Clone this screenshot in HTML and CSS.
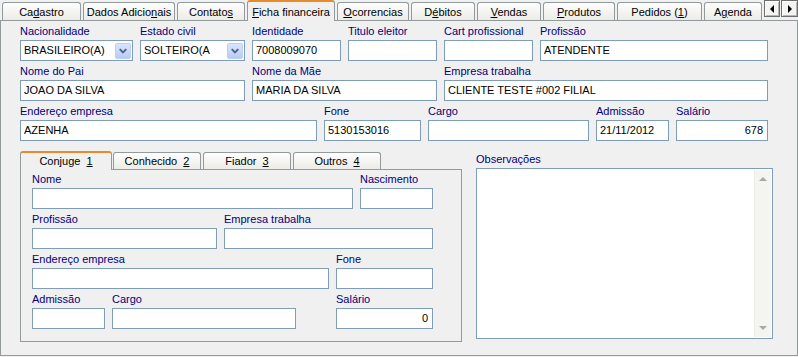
FILE: index.html
```html
<!DOCTYPE html>
<html lang="pt-BR">
<head>
  <meta charset="UTF-8">
  <title>Ficha financeira</title>
  <link rel="stylesheet" href="styles.css">
</head>
<body>
  <!-- Abas principais -->
  <div class="tabs">
    <div class="tab t-cad">Ca<u>d</u>astro</div>
    <div class="tab t-dad">Dados Adicio<u>n</u>ais</div>
    <div class="tab t-con">Contato<u>s</u></div>
    <div class="tab t-fic active"><u>F</u>icha financeira</div>
    <div class="tab t-oco"><u>O</u>correncias</div>
    <div class="tab t-deb">D<u>é</u>bitos</div>
    <div class="tab t-ven"><u>V</u>endas</div>
    <div class="tab t-pro"><u>P</u>rodutos</div>
    <div class="tab t-ped">Pedidos (<u>1</u>)</div>
    <div class="tab t-age">A<u>g</u>enda</div>
    <div class="scroll-btns">
      <span class="sbtn"><i class="tri-left"></i></span>
      <span class="sbtn"><i class="tri-right"></i></span>
    </div>
  </div>

  <div class="panel">
    <div class="row">
      <div class="field w113">
        <label>Nacionalidade</label>
        <div class="input combo"><span class="val">BRASILEIRO(A)</span><span class="drop"><svg width="15" height="15" viewBox="0 0 15 15"><path d="M4 6 L7.5 9.5 L11 6" fill="none" stroke="#4d6185" stroke-width="2"/></svg></span></div>
      </div>
      <div class="field w105">
        <label>Estado civil</label>
        <div class="input combo"><span class="val">SOLTEIRO(A</span><span class="drop"><svg width="15" height="15" viewBox="0 0 15 15"><path d="M4 6 L7.5 9.5 L11 6" fill="none" stroke="#4d6185" stroke-width="2"/></svg></span></div>
      </div>
      <div class="field w89">
        <label>Identidade</label>
        <div class="input">7008009070</div>
      </div>
      <div class="field w89">
        <label>Titulo eleitor</label>
        <div class="input"></div>
      </div>
      <div class="field w89">
        <label>Cart profissional</label>
        <div class="input"></div>
      </div>
      <div class="field w228">
        <label>Profissão</label>
        <div class="input">ATENDENTE</div>
      </div>
    </div>

    <div class="row">
      <div class="field w225">
        <label>Nome do Pai</label>
        <div class="input">JOAO DA SILVA</div>
      </div>
      <div class="field w185">
        <label>Nome da Mãe</label>
        <div class="input">MARIA DA SILVA</div>
      </div>
      <div class="field w324">
        <label>Empresa trabalha</label>
        <div class="input">CLIENTE TESTE #002 FILIAL</div>
      </div>
    </div>

    <div class="row">
      <div class="field w297">
        <label>Endereço empresa</label>
        <div class="input">AZENHA</div>
      </div>
      <div class="field w97">
        <label>Fone</label>
        <div class="input">5130153016</div>
      </div>
      <div class="field w161">
        <label>Cargo</label>
        <div class="input"></div>
      </div>
      <div class="field w73">
        <label>Admissão</label>
        <div class="input">21/11/2012</div>
      </div>
      <div class="field w92">
        <label>Salário</label>
        <div class="input num">678</div>
      </div>
    </div>

    <div class="lower">
      <div class="sub">
        <div class="subtabs">
          <div class="subtab active">Conjuge&nbsp;&nbsp;<u>1</u></div>
          <div class="subtab">Conhecido&nbsp;&nbsp;<u>2</u></div>
          <div class="subtab">Fiador&nbsp;&nbsp;<u>3</u></div>
          <div class="subtab">Outros&nbsp;&nbsp;<u>4</u></div>
        </div>
        <div class="subpanel">
          <div class="row">
            <div class="field w321">
              <label>Nome</label>
              <div class="input"></div>
            </div>
            <div class="field w73">
              <label>Nascimento</label>
              <div class="input"></div>
            </div>
          </div>
          <div class="row">
            <div class="field w185">
              <label>Profissão</label>
              <div class="input"></div>
            </div>
            <div class="field w209">
              <label>Empresa trabalha</label>
              <div class="input"></div>
            </div>
          </div>
          <div class="row">
            <div class="field w297">
              <label>Endereço empresa</label>
              <div class="input"></div>
            </div>
            <div class="field w97">
              <label>Fone</label>
              <div class="input"></div>
            </div>
          </div>
          <div class="row">
            <div class="field w73">
              <label>Admissão</label>
              <div class="input"></div>
            </div>
            <div class="field w184">
              <label>Cargo</label>
              <div class="input"></div>
            </div>
            <div class="field w97 push">
              <label>Salário</label>
              <div class="input num">0</div>
            </div>
          </div>
        </div>
      </div>

      <div class="field obs">
        <label>Observações</label>
        <div class="memo">
          <div class="vscroll">
            <i class="up"></i>
            <i class="down"></i>
          </div>
        </div>
      </div>
    </div>
  </div>
</body>
</html>
```

FILE: styles.css
```css
:root {
  --bg: #f0f0f0;
  --frame: #919b9c;
  --edit: #7f9db9;
  --label: #000080;
}
* { margin: 0; padding: 0; box-sizing: border-box; }
body {
  width: 798px;
  height: 357px;
  overflow: hidden;
  background: var(--bg);
  font-family: "Liberation Sans", Arial, sans-serif;
  font-size: 11px;
  color: #000;
}
u { text-decoration: underline; text-underline-offset: 1px; }

/* Abas principais */
.tabs {
  display: flex;
  align-items: flex-end;
  height: 20px;
  padding-left: 2px;
  gap: 2px;
}
.tab {
  height: 18px;
  line-height: 18px;
  text-align: center;
  white-space: nowrap;
  border: 1px solid var(--frame);
  border-bottom: none;
  border-radius: 3px 3px 0 0;
  background: linear-gradient(#fefefe, #ecebe6);
}
.tab.active {
  height: 21px;
  margin-bottom: -1px;
  line-height: 20px;
  border-top: 2px solid #e68b2c;
  background: var(--bg);
  position: relative;
  z-index: 1;
}
.t-cad { width: 79px; }
.t-dad { width: 92px; }
.t-con { width: 68px; }
.t-fic { width: 88px; }
.t-oco { width: 72px; }
.t-deb { width: 64px; }
.t-ven { width: 64px; }
.t-pro { width: 72px; }
.t-ped { width: 85px; }
.t-age { width: 58px; }

.scroll-btns {
  display: flex;
  gap: 1px;
  align-self: flex-start;
}
.sbtn {
  width: 16px;
  height: 17px;
  display: flex;
  align-items: center;
  justify-content: center;
  background: #f4f4f0;
  border: 1px solid #6e6e6e;
  box-shadow: inset 1px 1px #fff, inset -1px -1px #b8b8b0;
}
.sbtn:last-child { width: 17px; }
.tri-left, .tri-right { width: 0; height: 0; border-top: 4px solid transparent; border-bottom: 4px solid transparent; }
.tri-left { border-right: 4px solid #000; }
.tri-right { border-left: 4px solid #000; }

/* Painel */
.panel {
  height: 336px;
  border: 1px solid var(--frame);
  padding: 3px 0 0 19px;
  display: flex;
  flex-direction: column;
  gap: 3px;
}
.row { display: flex; gap: 7px; }
.field { display: flex; flex-direction: column; }
.field label {
  color: var(--label);
  height: 14px;
  line-height: 14px;
  margin-bottom: 2px;
  white-space: nowrap;
}
.input {
  height: 21px;
  border: 1px solid var(--edit);
  background: #fff;
  padding: 0 3px;
  line-height: 19px;
  white-space: nowrap;
  overflow: hidden;
}
.input.num { text-align: right; padding-right: 4px; }
.combo { display: flex; align-items: center; padding-right: 1px; }
.combo .val { flex: 1; overflow: hidden; }
.drop {
  width: 16px;
  height: 16px;
  display: flex;
  align-items: center;
  justify-content: center;
  border: 1px solid #bdcff5;
  border-radius: 2px;
  background: linear-gradient(#dae5fd, #b6cbf5);
}

.w73 { width: 73px; }
.w89 { width: 89px; }
.w92 { width: 92px; }
.w97 { width: 97px; }
.w105 { width: 105px; }
.w113 { width: 113px; }
.w161 { width: 161px; }
.w184 { width: 184px; }
.w185 { width: 185px; }
.w209 { width: 209px; }
.w225 { width: 225px; }
.w228 { width: 228px; }
.w297 { width: 297px; }
.w321 { width: 321px; }
.w324 { width: 324px; }
.push { margin-left: auto; }

/* Parte de baixo: abas do cônjuge e observações */
.lower { display: flex; margin-top: 7px; }
.sub { width: 442px; }
.subtabs {
  display: flex;
  align-items: flex-end;
  height: 18px;
}
.subtab {
  width: 88px;
  height: 17px;
  line-height: 16px;
  margin-left: 2px;
  text-align: center;
  white-space: nowrap;
  border: 1px solid var(--frame);
  border-bottom: none;
  border-radius: 3px 3px 0 0;
  background: linear-gradient(#fefefe, #ecebe6);
}
.subtab.active {
  width: 92px;
  height: 19px;
  margin: 0 -1px -1px 0;
  border-top: 2px solid #e68b2c;
  background: var(--bg);
  position: relative;
  z-index: 1;
}
.subpanel {
  height: 173px;
  border: 1px solid var(--frame);
  padding: 2px 0 0 11px;
  display: flex;
  flex-direction: column;
  gap: 3px;
}
.subpanel .row { width: 401px; }

.obs { margin: 1px 0 0 14px; }
.memo {
  width: 297px;
  height: 171px;
  border: 1px solid var(--edit);
  background: #fff;
  padding: 1px;
  display: flex;
  justify-content: flex-end;
}
.vscroll {
  width: 17px;
  height: 100%;
  background: #f4f4f0;
  border-left: 1px solid #ececE6;
  display: flex;
  flex-direction: column;
  justify-content: space-between;
  align-items: center;
  padding: 7px 0 7px;
}
.up, .down { width: 0; height: 0; border-left: 4px solid transparent; border-right: 4px solid transparent; }
.up { border-bottom: 4px solid #a8a8a4; }
.down { border-top: 4px solid #a8a8a4; }
```
